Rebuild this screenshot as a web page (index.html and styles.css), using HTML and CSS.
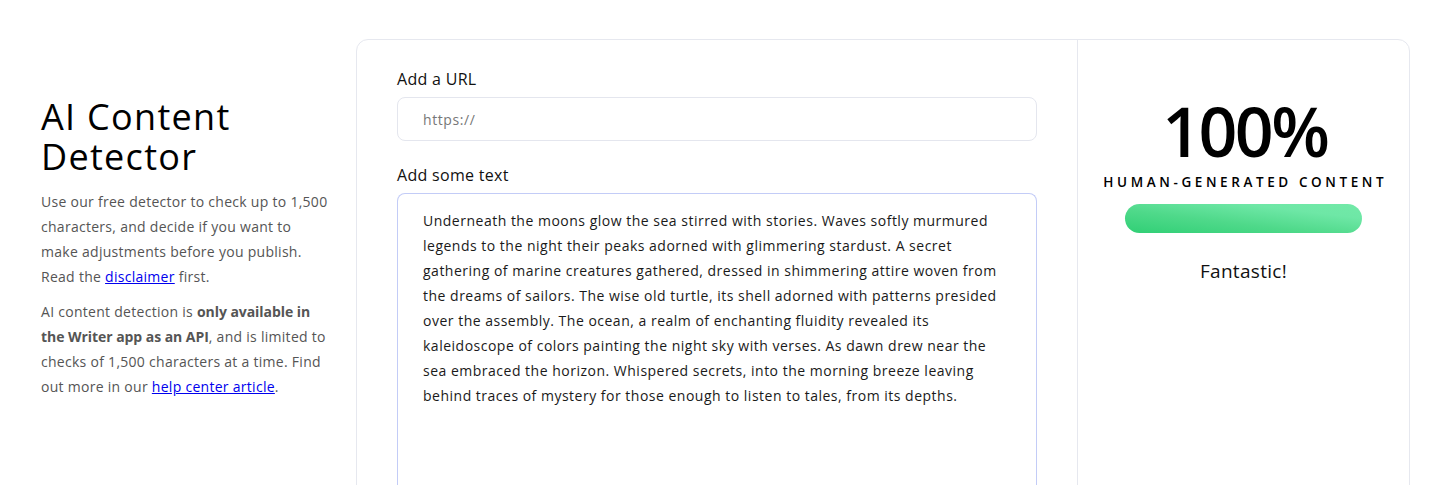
FILE: index.html
```html
<!DOCTYPE html>
<html lang="en">
<head>
<meta charset="utf-8">
<title>AI Content Detector</title>
<link rel="stylesheet" href="styles.css">
</head>
<body>
<main class="page">
  <section class="intro">
    <h1 class="intro-title">AI Content Detector</h1>
    <p class="intro-text">Use our free detector to check up to 1,500 characters, and decide if you want to make adjustments before you publish. Read the <a href="#">disclaimer</a> first.</p>
    <p class="intro-text">AI content detection is <strong>only available in the Writer app as an API</strong>, and is limited to checks of 1,500 characters at a time. Find out more in our <a href="#">help center article</a>.</p>
  </section>
  <section class="card">
    <div class="form">
      <label class="field-label" for="url">Add a URL</label>
      <div class="url-input" id="url">https://</div>
      <label class="field-label text-label" for="txt">Add some text</label>
      <div class="text-area" id="txt">Underneath the moons glow the sea stirred with stories. Waves softly murmured legends to the night their peaks adorned with glimmering stardust. A secret gathering of marine creatures gathered, dressed in shimmering attire woven from the dreams of sailors. The wise old turtle, its shell adorned with patterns presided over the assembly. The ocean, a realm of enchanting fluidity revealed its kaleidoscope of colors painting the night sky with verses. As dawn drew near the sea embraced the horizon. Whispered secrets, into the morning breeze leaving behind traces of mystery for those enough to listen to tales, from its depths.</div>
    </div>
    <div class="result">
      <div class="score">100%</div>
      <div class="score-label">HUMAN-GENERATED CONTENT</div>
      <div class="bar"></div>
      <div class="verdict">Fantastic!</div>
    </div>
  </section>
</main>
</body>
</html>
```

FILE: styles.css
```css
* { box-sizing: border-box; }
html, body { margin: 0; padding: 0; background: #fff; }
body {
  font-family: "Open Sans", "Liberation Sans", sans-serif;
  color: #111;
  overflow: hidden;
}
.page {
  display: flex;
  align-items: flex-start;
  padding: 39px 0 0 41px;
  gap: 25px;
}
.intro {
  width: 290px;
  flex: none;
  padding-top: 58px;
}
.intro-title {
  margin: 0 0 12px;
  font-size: 36px;
  line-height: 40px;
  font-weight: 400;
  letter-spacing: 1.3px;
  color: #000;
}
.intro-text {
  margin: 0 0 10px;
  font-size: 14px;
  line-height: 25px;
  letter-spacing: 0.28px;
  color: #555;
}
.intro-text strong { font-weight: 700; color: #555; letter-spacing: -0.05px; }
.intro-text a { color: #0000ee; }
.card {
  width: 1054px;
  height: 470px;
  flex: none;
  display: flex;
  border: 1px solid #e6e8ef;
  border-radius: 12px;
}
.form {
  width: 721px;
  padding: 29px 40px 0;
  border-right: 1px solid #e6e8ef;
  display: flex;
  flex-direction: column;
}
.field-label {
  font-size: 16px;
  line-height: 20px;
  letter-spacing: 0.3px;
  color: #111;
}
.url-input {
  margin-top: 8px;
  height: 44px;
  border: 1px solid #e4e6ee;
  border-radius: 8px;
  padding: 0 25px;
  display: flex;
  align-items: center;
  font-size: 14px;
  letter-spacing: 0.6px;
  color: #777;
}
.text-label { margin-top: 24px; }
.text-area {
  margin-top: 8px;
  flex: 1;
  border: 1px solid #c3ccf7;
  border-bottom: none;
  border-radius: 8px 8px 0 0;
  padding: 14px 36px 0 25px;
  font-size: 14px;
  line-height: 25px;
  letter-spacing: 0.5px;
  color: #1a1a1a;
}
.result {
  flex: 1;
  display: flex;
  flex-direction: column;
  align-items: center;
  padding-top: 51px;
}
.score {
  font-size: 68px;
  line-height: 80px;
  font-weight: 600;
  letter-spacing: -2.6px;
  margin-right: -2.6px;
  color: #000;
}
.score-label {
  margin-top: 2px;
  font-size: 13.5px;
  font-weight: 600;
  letter-spacing: 3.6px;
  margin-right: -3.6px;
  color: #000;
}
.bar {
  margin-top: 13px;
  width: 237px;
  height: 29px;
  border-radius: 15px;
  background: linear-gradient(to top right, #30cf75 0%, #4fd98a 40%, #6ee7a6 75%, #72e9a8 100%);
}
.verdict {
  margin-top: 25px;
  font-size: 19px;
  letter-spacing: 0.3px;
  color: #111;
}
```
